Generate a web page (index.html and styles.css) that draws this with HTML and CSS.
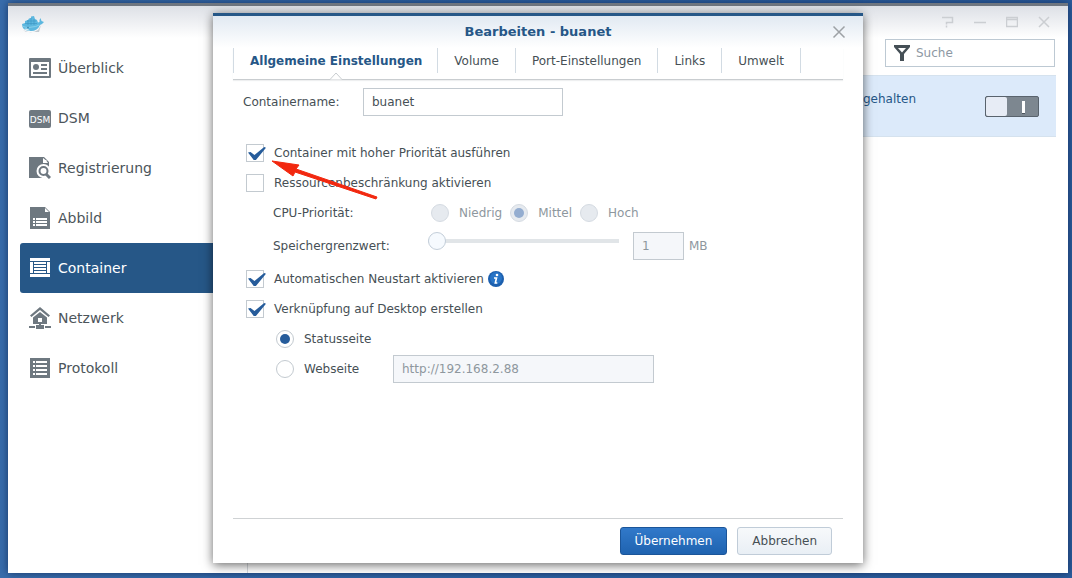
FILE: index.html
```html
<!DOCTYPE html>
<html lang="de">
<head>
<meta charset="utf-8">
<title>Docker</title>
<link rel="stylesheet" href="styles.css">
</head>
<body>
<div class="window">
  <header class="titlebar">
    <svg class="whale" width="22" height="17" viewBox="0 0 22 17" aria-hidden="true">
      <path d="M1 14 Q9 18.500 16 14 L19 9 L17 16 H4Z" fill="#c3cbd1"/>
      <path d="M0 8 L3 7 L3 5 L6 4 L7 2.500 L9 2 L9 .5 L12 0 L13 3 L15 4 L16 6.500 L17.500 6 Q17 4 18.500 2 L19.500 5 L22 6 Q20 8.500 18 9 Q15.500 15 9 15 Q2 15 .5 11Z" fill="#5cb7df"/>
      <path d="M3 7.500h12M5 5h9M6 4v5M9 2v7M12 3v6" stroke="#3f9ac6" stroke-width=".7" fill="none"/>
      <path d="M1 10.500 Q6 12.500 10 11 Q14 11 17 9" stroke="#87cfea" fill="none"/>
      <path d="M2 13 Q5 11.500 8 14.500 Q5 15 2 13Z" fill="#d4e9f1"/>
      <circle cx="6" cy="11.500" r=".7" fill="#246b94"/>
    </svg>
    <div class="window-tools">
      <button type="button" aria-label="Hilfe"><svg width="12" height="12" viewBox="0 0 12 12"><path d="M0 1.500H10.500V6.500H4.500V8.500M4.500 9.500V11.500"/></svg></button>
      <button type="button" aria-label="Minimieren"><svg width="12" height="12" viewBox="0 0 12 12"><path d="M0 6.500H12"/></svg></button>
      <button type="button" aria-label="Maximieren"><svg width="12" height="12" viewBox="0 0 12 12"><path d="M.5 1.500H11.500V10.500H.5ZM.5 3.500H11.500"/></svg></button>
      <button type="button" aria-label="Schließen"><svg width="12" height="12" viewBox="0 0 12 12"><path d="M1 1L11 11M11 1L1 11"/></svg></button>
    </div>
  </header>
  <div class="body">
    <nav class="sidebar">
      <a href="#ueberblick" class="nav-item">
        <svg width="22" height="22" viewBox="0 0 22 22"><rect y="1" width="22" height="20" rx="1"/><path class="cut" d="M2 5H20V19H2Z"/><circle cx="7" cy="10" r="3"/><path d="M12 7h6v2h-6zM12 11h6v2h-6zM4 15h14v2H4z"/></svg>
        Überblick</a>
      <a href="#dsm" class="nav-item">
        <svg width="22" height="22" viewBox="0 0 22 22"><rect y="3" width="22" height="18" rx="2"/><text class="cut dsm-text" x="11" y="16" text-anchor="middle">DSM</text></svg>
        DSM</a>
      <a href="#registrierung" class="nav-item">
        <svg width="22" height="22" viewBox="0 0 22 22"><path d="M0 0H15L20 5V21H0Z"/><path class="cut" d="M14 1V6H19L17.500 4V3H16.500Z"/><circle class="cut" cx="14.500" cy="14" r="7"/><path class="cut" d="M17 15L22 19V22H12Z"/><circle class="ring" cx="14.500" cy="14" r="4"/><path class="handle" d="M17 17L21 21"/></svg>
        Registrierung</a>
      <a href="#abbild" class="nav-item">
        <svg width="22" height="22" viewBox="0 0 22 22"><path d="M1 0H16L21 5V22H1Z"/><path class="cut" d="M16 1V5H20ZM4 11h2v2H4zM7 11h11v2H7zM4 14h2v2H4zM7 14h11v2H7zM4 17h2v2H4zM7 17h11v2H7z"/></svg>
        Abbild</a>
      <a href="#container" class="nav-item active" aria-current="page">
        <svg width="22" height="22" viewBox="0 0 22 22"><path d="M1 1H21V4H1ZM1 17H21V20H1ZM1 5H4V16H1ZM18 5H21V16H18ZM5 5H17V7H5ZM5 8H17V10H5ZM5 11H17V13H5ZM5 14H17V16H5Z"/></svg>
        Container</a>
      <a href="#netzwerk" class="nav-item">
        <svg width="22" height="22" viewBox="0 0 22 22"><path d="M11 0L21 8.500L19.500 10L11 3L2.500 10L1 8.500Z"/><path d="M11 5L18 10.500V17H4V10.500ZM10 16h2v3h-2zM7 18h8v4H7zM0 19h6v2H0zM16 19h6v2h-6z"/><path class="cut" d="M9 11h4v4H9z"/></svg>
        Netzwerk</a>
      <a href="#protokoll" class="nav-item">
        <svg width="22" height="22" viewBox="0 0 22 22"><path d="M1 1H21V21H1Z"/><path class="cut" d="M4 4h2v2H4zM7 4h11v2H7zM4 8h2v2H4zM7 8h11v2H7zM4 12h2v2H4zM7 12h11v2H7zM4 16h2v2H4zM7 16h11v2H7z"/></svg>
        Protokoll</a>
    </nav>
    <main class="content">
      <label class="search">
        <svg width="16" height="16" viewBox="0 0 16 16" aria-hidden="true"><path d="M0 0H16V2L10 9V16H6V9L0 2Z" fill="#454f56"/><path d="M4 3H12L8 7.500Z" fill="#fff"/></svg>
        <input type="search" placeholder="Suche" aria-label="Suche">
      </label>
      <div class="container-row">
        <span class="state">gehalten</span>
        <button type="button" class="switch" role="switch" aria-checked="false" aria-label="Container starten"></button>
      </div>
    </main>
  </div>

  <section class="dialog" role="dialog" aria-labelledby="dialog-title">
    <header class="dialog-header">
      <h1 id="dialog-title">Bearbeiten - buanet</h1>
      <button type="button" class="close" aria-label="Dialog schließen"><svg width="14" height="14" viewBox="0 0 14 14"><path d="M1.500 1.500L12.500 12.500M12.500 1.500L1.500 12.500" stroke="#9da1a5" stroke-width="1.500"/></svg></button>
    </header>
    <div class="tabs" role="tablist">
      <button type="button" role="tab" class="tab selected" aria-selected="true">Allgemeine Einstellungen<svg class="notch" width="14" height="8" viewBox="0 0 14 8"><path d="M0 7.500H1L7 1L13 7.500H14" fill="#fff"/></svg></button>
      <button type="button" role="tab" class="tab">Volume</button>
      <button type="button" role="tab" class="tab">Port-Einstellungen</button>
      <button type="button" role="tab" class="tab">Links</button>
      <button type="button" role="tab" class="tab">Umwelt</button>
    </div>
    <form class="form">
      <div class="row name-row">
        <label for="name">Containername:</label>
        <input class="field name-field" id="name" type="text" value="buanet">
      </div>
      <div class="row"><input type="checkbox" id="prio" checked><label for="prio">Container mit hoher Priorität ausführen</label></div>
      <div class="row"><input type="checkbox" id="limit"><label for="limit">Ressourcenbeschränkung aktivieren</label></div>
      <div class="row nested" role="radiogroup" aria-labelledby="cpu">
        <span class="caption" id="cpu">CPU-Priorität:</span>
        <div class="options">
          <label class="option"><input type="radio" name="cpu" disabled>Niedrig</label>
          <label class="option"><input type="radio" name="cpu" disabled checked>Mittel</label>
          <label class="option"><input type="radio" name="cpu" disabled>Hoch</label>
        </div>
      </div>
      <div class="row nested memory">
        <label class="caption" for="mem">Speichergrenzwert:</label>
        <input class="slider" type="range" id="mem" min="0" max="100" value="0" disabled>
        <input class="field amount" type="text" value="1" aria-label="Speicher in MB" disabled>
        <span class="unit">MB</span>
      </div>
      <div class="row"><input type="checkbox" id="restart" checked><label for="restart">Automatischen Neustart aktivieren</label>
        <svg class="info" width="16" height="16" viewBox="0 0 16 16" role="img" aria-label="Info"><circle cx="8" cy="8" r="8" fill="#1c5fae"/><circle cx="8" cy="7" r="6" fill="#2874c6"/><circle cx="9" cy="4" r="1.300" fill="#fff"/><path d="M6 7H8.500L7.300 12H9.300" stroke="#fff" stroke-width="1.600" fill="none"/></svg>
      </div>
      <div class="row"><input type="checkbox" id="link" checked><label for="link">Verknüpfung auf Desktop erstellen</label></div>
      <div class="row sub"><input type="radio" id="status" name="target" checked><label for="status">Statusseite</label></div>
      <div class="row sub"><input type="radio" id="web" name="target"><label class="web-label" for="web">Webseite</label>
        <input class="field url" type="text" value="http://192.168.2.88" aria-label="Adresse der Webseite" disabled></div>
    </form>
    <footer class="dialog-footer">
      <button type="button" class="btn primary">Übernehmen</button>
      <button type="button" class="btn">Abbrechen</button>
    </footer>
    <svg class="pointer" width="108" height="42" viewBox="0 0 108 42" aria-hidden="true"><path d="M1 2L28 6L25 10L106 38L105 40L24 13L22 17Z" fill="#f2280f" stroke="#f2280f" stroke-linejoin="round"/></svg>
  </section>
</div>
</body>
</html>
```

FILE: styles.css
```css
* { box-sizing: border-box; }

body {
  margin: 0;
  min-height: 100vh;
  display: flex;
  padding: 3px 4px 5px 8px;
  background: linear-gradient(90deg, #396dac, #2e63a5 50%, #2c5d9d);
  font: 12px/16px Verdana, "DejaVu Sans", sans-serif;
  color: #464f55;
}

button, input { font: inherit; color: inherit; margin: 0; }
button { padding: 0; border: 0; background: none; cursor: pointer; }

.window {
  position: relative;
  flex: 1;
  display: flex;
  flex-direction: column;
  border-top: 3px solid #6f7680;
  background: linear-gradient(#dde0e6, #fff 32px);
  box-shadow: 0 0 8px rgba(10, 30, 70, .7);
}

.titlebar {
  display: flex;
  justify-content: space-between;
  height: 33px;
  padding: 10px 18px 0 14px;
}
.window-tools { display: flex; gap: 20px; height: 12px; }
.window-tools svg { display: block; fill: none; stroke: #cbced2; stroke-width: 1.5; }

.body { flex: 1; display: flex; }
.sidebar {
  width: 240px;
  padding: 4px 0 0 12px;
  border-right: 1px solid #d5d9dd;
}
.nav-item {
  display: flex;
  align-items: center;
  gap: 7px;
  height: 50px;
  padding-left: 9px;
  border-radius: 3px 0 0 3px;
  font-size: 14px;
  color: #4c555b;
  text-decoration: none;
}
.nav-item svg { fill: #6e7880; }
.nav-item .cut { fill: #fff; }
.nav-item .ring { fill: none; stroke: #6e7880; stroke-width: 2; }
.nav-item .handle { stroke: #6e7880; stroke-width: 3; }
.dsm-text { font-size: 9px; }
.nav-item.active { background: #265787; color: #fff; }
.nav-item.active svg { fill: #fff; }

.content {
  flex: 1;
  display: flex;
  flex-direction: column;
  align-items: flex-end;
  gap: 8px;
  padding-right: 12px;
}
.search {
  display: flex;
  align-items: center;
  gap: 6px;
  width: 170px;
  height: 28px;
  margin-right: 1px;
  padding: 0 8px;
  border: 1px solid #bdc9d3;
  background: #fff;
}
.search svg { flex: none; }
.search input { flex: 1; min-width: 0; padding: 0; border: 0; outline: 0; background: none; }
.search input::placeholder { color: #8d98a3; opacity: 1; }
.container-row {
  align-self: stretch;
  display: flex;
  justify-content: flex-end;
  gap: 69px;
  height: 62px;
  padding: 15px 17px 0 0;
  background: #dceafa;
  border-block: 1px solid #d5e2ee;
  color: #265787;
}
.switch {
  position: relative;
  width: 54px;
  height: 21px;
  margin-top: 5px;
  border: 1px solid #59636d;
  border-radius: 2px;
  background: #7d8790;
}
.switch::before, .switch::after { content: ""; position: absolute; }
.switch::before { inset: 0 auto 0 0; width: 21px; border-radius: 2px; background: #e7ecf5; }
.switch::after { left: 36px; top: 4px; width: 3px; height: 12px; background: #fff; border-bottom: 1px solid #4c555d; }

.dialog {
  position: absolute;
  top: 7px;
  bottom: 10px;
  left: 50%;
  width: 650px;
  margin-left: -325px;
  display: flex;
  flex-direction: column;
  padding: 0 20px;
  border-top: 3px solid #265787;
  background: linear-gradient(#e1e9f2, #fff 32px);
  box-shadow: 0 2px 10px rgba(0, 0, 0, .6);
}
.dialog-header { position: relative; height: 32px; text-align: center; color: #265787; }
.dialog-header h1 { margin: 0; font-size: 13px; line-height: 32px; }
.close { position: absolute; right: -3px; top: 9px; }
.close svg { display: block; }

.tabs {
  display: flex;
  height: 32px;
  border-bottom: 1px solid #c9cdd0;
  box-shadow: 0 1px 1px #eeeff0;
}
.tab {
  position: relative;
  height: 25px;
  padding: 0 16px;
  border-right: 1px solid #d2dbe3;
}
.tab.selected { border-left: 1px solid #d2dbe3; padding: 0 15px 0 16px; font-weight: bold; color: #265787; }
.notch { position: absolute; left: 50%; bottom: -7px; margin-left: -7px; stroke: #c9cdd0; }

.form { flex: 1; padding: 7px 0 0 10px; }
.row { display: flex; align-items: center; height: 30px; padding-left: 3px; }
.name-row { padding-left: 0; margin-bottom: 21px; }
.name-row label { width: 120px; }
.nested { padding-left: 30px; }
.memory { height: 36px; }
.sub { padding-left: 33px; }
.caption { width: 155px; }

.field {
  height: 28px;
  padding: 0 8px;
  border: 1px solid #c3cad0;
  background: #fff;
}
.field:disabled { background: #f5f7fa; color: #8e979e; }
.name-field { width: 200px; }
.amount { width: 51px; margin: 0 5px 0 14px; }
.url { width: 261px; }
.web-label { width: 89px; }
.unit, .options { color: #8e979e; }

input[type="checkbox"], input[type="radio"] {
  appearance: none;
  position: relative;
  flex: none;
  width: 18px;
  height: 18px;
  margin-right: 10px;
  border: 1px solid #c3cad0;
  background: #fff;
}
input[type="checkbox"]:checked::after {
  content: "";
  position: absolute;
  left: 1px;
  top: 2px;
  width: 18px;
  height: 13px;
  background: #265c9b;
  clip-path: polygon(0 42%, 14% 38%, 36% 62%, 90% 0, 100% 6%, 44% 100%, 32% 100%);
}
input[type="radio"] { border-radius: 50%; }
input[type="radio"]:checked::after {
  content: "";
  position: absolute;
  inset: 3px;
  border-radius: 50%;
  background: #265c9b;
}
input[type="radio"]:disabled { background: #e6eaef; border-color: #d5dbe2; }
input[type="radio"]:disabled:checked::after { background: #94add0; }
.options { display: flex; gap: 8px; padding-left: 3px; }
.option { display: flex; align-items: center; }
.info { margin-left: 4px; }

.slider {
  appearance: none;
  align-self: flex-start;
  width: 191px;
  height: 18px;
  margin-top: 4px;
  background: linear-gradient(#e1e5e8, #e1e5e8) center / 100% 4px no-repeat;
}
.slider::-webkit-slider-thumb {
  appearance: none;
  width: 18px;
  height: 18px;
  border: 1px solid #c3ced9;
  border-radius: 50%;
  background: #f6fafe;
}

.dialog-footer {
  display: flex;
  justify-content: flex-end;
  gap: 10px;
  padding: 8px 11px 8px 0;
  border-top: 1px solid #cfd2d4;
}
.btn {
  height: 28px;
  padding: 0 14px;
  border: 1px solid #c0ccd8;
  border-radius: 3px;
  background: linear-gradient(#f7f9fb, #e9eff5);
}
.btn.primary { border-color: #1b5599; background: linear-gradient(#3179ca, #1f63b0); color: #fff; }

.pointer { position: absolute; left: 58px; top: 143px; }
```
